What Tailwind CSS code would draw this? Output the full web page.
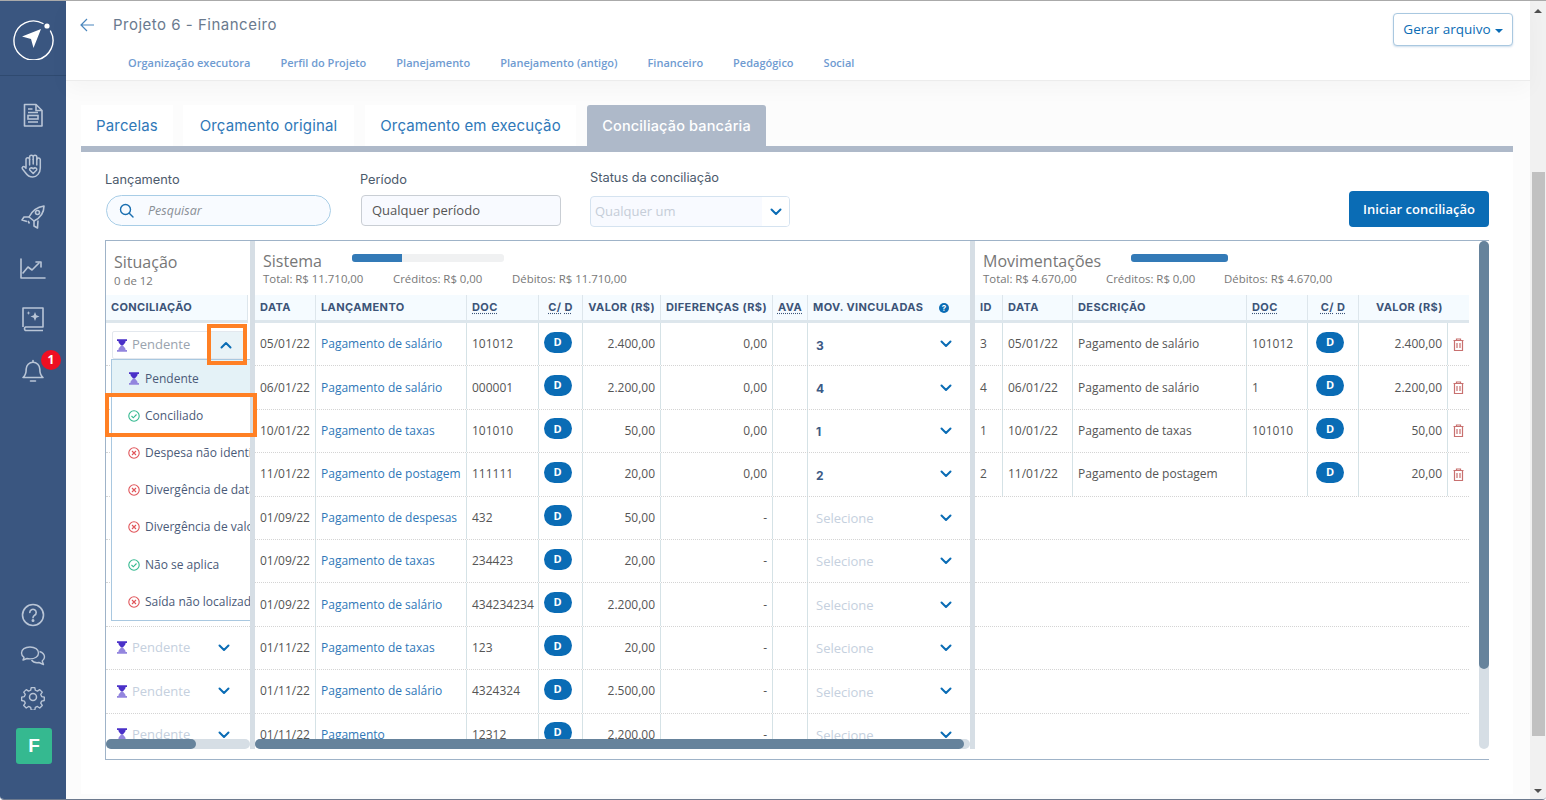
<!DOCTYPE html>
<html lang="pt-BR">
<head>
  <meta charset="UTF-8">
  <title>Projeto 6 - Financeiro</title>
  <script src="https://cdn.jsdelivr.net/npm/@tailwindcss/browser@4"></script>
</head>
<body class="font-['Open_Sans',sans-serif] bg-white">
  <div class="flex w-[1546px] h-[800px] overflow-hidden border-t border-b border-t-[#aaaaaa] border-b-[#6d7a8e] rounded-b-[4px]">

    <!-- Sidebar -->
    <aside class="w-[66px] h-full shrink-0 bg-[#3a5680] flex flex-col items-center text-[#b9c5d6] pb-[35px]">
      <div class="w-full h-[75px] border-b border-[#2f4a70] flex items-center justify-center shrink-0">
        <svg width="44" height="44" viewBox="0 0 44 44" fill="none">
          <path d="M32 7.500A19.500 19.500 0 1 0 39.500 15" stroke="#fff" stroke-width="1.400" stroke-linecap="round"/>
          <circle cx="36" cy="10" r="2.600" fill="#fff"/>
          <path d="M30 13 L11 20.500 L20 23 L22.500 32 Z" fill="#fff"/>
        </svg>
      </div>
      <div class="flex flex-col items-center gap-[25px] mt-[26px]">
        <svg width="26" height="26" viewBox="0 0 26 26" fill="none" stroke="currentColor" stroke-width="1.600">
          <path d="M4.500 2.500h11.500l6 6v15.500H4.500z" stroke-linejoin="round"/><path d="M16 2.500v6h6M8 7h4.500M8 10.500h10M8 20h10"/><rect x="8" y="13.500" width="10" height="3.500"/>
        </svg>
        <svg width="26" height="26" viewBox="0 0 26 26" fill="none" stroke="currentColor" stroke-width="1.500" stroke-linecap="round" stroke-linejoin="round">
          <path d="M6 14.500V6.500a1.800 1.800 0 0 1 3.600 0V4a1.800 1.800 0 0 1 3.600 0v-.2a0 0 0 0 1 0 0M13.200 4v2.500M13.200 4a1.800 1.800 0 0 1 3.600 0v2.500a1.800 1.800 0 0 1 3.500 0V15c0 5-3.500 9-7.500 9-3.500 0-5.500-1.500-7.500-4.500L2.500 16c-1.200-1.700 1-3.200 2.300-2l1.200 1.300"/><path d="M9.600 6.500V12M13.200 6.500V11M16.800 6.500V12"/><path d="M13.200 20.500l-3.200-3.200c-1.300-1.600 1.200-3.500 3.200-1.500 2-2 4.500-.1 3.200 1.500z"/>
        </svg>
        <svg width="26" height="26" viewBox="0 0 26 26" fill="none" stroke="currentColor" stroke-width="1.600" stroke-linejoin="round">
          <path d="M9 13C12 7 17 3 24 2c0 7-4 12-10 15z"/><circle cx="17.500" cy="8.500" r="2"/><path d="M9 13H4l-2 3 5 1.500M14 17v5l3.500 2 .5-7.500M8 17l1.500 2.500"/>
        </svg>
        <svg width="26" height="26" viewBox="0 0 26 26" fill="none" stroke="currentColor" stroke-width="1.600" stroke-linecap="round" stroke-linejoin="round">
          <path d="M1 4v19h24"/><path d="M3 18l5-6 4 3 7-7"/><path d="M16 7h5v5"/>
        </svg>
        <svg width="26" height="26" viewBox="0 0 26 26" fill="none" stroke="currentColor" stroke-width="1.600" stroke-linejoin="round">
          <path d="M3 21V2h20v19H5.500a2 2 0 0 0 0 3.500H23"/><path d="M15 6l1.300 3.200 3.200 1.300-3.200 1.300L15 15l-1.300-3.200-3.200-1.300 3.200-1.300zM8.500 5l.5 1.500 1.500.5-1.500.5-.5 1.500-.5-1.500-1.500-.5 1.500-.5z" fill="currentColor" stroke="none"/>
        </svg>
        <div class="relative">
          <svg width="26" height="26" viewBox="0 0 26 26" fill="none" stroke="currentColor" stroke-width="1.600" stroke-linejoin="round" stroke-linecap="round">
            <path d="M3 20.500c2.500-2 3.200-4 3.200-8.500a6.800 6.800 0 0 1 13.600 0c0 4.500.7 6.500 3.200 8.500z"/><path d="M13 5V3.500M10.500 24h5"/>
          </svg>
          <span class="absolute left-[21px] top-[-7px] w-[20px] h-[20px] rounded-full bg-[#ee0f22] text-white text-[12px] font-bold flex items-center justify-center">1</span>
        </div>
      </div>
      <div class="mt-auto flex flex-col items-center gap-[15px]">
        <svg width="26" height="26" viewBox="0 0 26 26" fill="none" stroke="currentColor" stroke-width="1.600" stroke-linecap="round">
          <circle cx="13" cy="13" r="10.500"/><path d="M9.800 10.500a3.200 3.200 0 1 1 4.800 2.800c-1 .6-1.600 1.200-1.600 2.500"/><circle cx="13" cy="18.500" r=".7" fill="currentColor"/>
        </svg>
        <svg width="26" height="26" viewBox="0 0 26 26" fill="none" stroke="currentColor" stroke-width="1.400" stroke-linejoin="round">
          <path d="M10 4c-5 0-8.500 2.500-8.500 6 0 1.800 1 3.300 2.500 4.400L3 17l4-1.500c1 .3 2 .4 3 .4 5 0 8.500-2.500 8.500-6S15 4 10 4z"/><path d="M19.500 8.500c3 1 5 3 5 5.500 0 1.700-.9 3-2.300 4l1.300 3.500-4.500-2c-3 .5-6-.3-7.500-2.500"/>
        </svg>
        <svg width="26" height="26" viewBox="0 0 26 26" fill="none" stroke="currentColor" stroke-width="1.500" stroke-linejoin="round">
          <circle cx="13" cy="13" r="3.500"/><path d="M11 2.500h4l.6 3 2.300 1 2.600-1.700 2.800 2.800-1.700 2.600 1 2.300 3 .6v0l-.1 3.800-2.900.6-1 2.300 1.700 2.600-2.800 2.800-2.600-1.700-2.300 1-.6 3h-4l-.6-3-2.300-1-2.600 1.700-2.800-2.800 1.700-2.600-1-2.300-3-.6v-3.800l3-.6 1-2.300-1.700-2.600 2.800-2.800 2.600 1.700 2.300-1z" transform="translate(1.300 1.300) scale(.9)"/>
        </svg>
        <div class="w-[36px] h-[36px] mt-[3px] ml-[2px] rounded-[3px] bg-[#35b990] text-white font-['Liberation_Sans',sans-serif] font-bold text-[19px] flex items-center justify-center">F</div>
      </div>
    </aside>

    <!-- Main -->
    <main class="flex-1 h-full bg-[#fcfcfc] flex flex-col min-w-0">
      <header class="relative h-[80px] shrink-0 bg-white border-b border-[#ececec] shadow-[0_8px_20px_rgba(0,0,0,0.03)]">
        <div class="flex items-center pl-[14px] pt-[13px]">
          <svg width="15" height="14" viewBox="0 0 15 14" fill="none" stroke="#4a86bd" stroke-width="1.200"><path d="M14 7H1M7 1 1 7l6 6"/></svg>
          <h1 class="ml-[18px] font-['Inter',sans-serif] text-[15px] text-[#6a7a8e] tracking-[0.5px]">Projeto 6 - Financeiro</h1>
        </div>
        <nav class="flex gap-[30px] pl-[62px] mt-[18px] text-[11px] font-semibold text-[#6f9bd1]">
          <a>Organização executora</a><a>Perfil do Projeto</a><a>Planejamento</a><a>Planejamento (antigo)</a><a>Financeiro</a><a>Pedagógico</a><a>Social</a>
        </nav>
        <button class="absolute right-[17px] top-[12px] w-[120px] h-[33px] rounded-[4px] border border-[#a9c8e0] shadow-[0_1px_2px_rgba(90,140,190,0.3)] bg-white text-[13.500px] text-[#0a6cb5] flex items-center justify-center gap-[4px]">
          Gerar arquivo <span class="w-0 h-0 border-x-[4px] border-x-transparent border-t-[4px] border-t-[#0a6cb5] mt-[2px]"></span>
        </button>
      </header>

      <section class="ml-[15px] w-[1432px] flex-1 mt-[24px] min-h-0">
        <!-- Tabs -->
        <div class="flex gap-[11px] h-[41px] font-['Inter',sans-serif] text-[15px] tracking-[0.15px] text-[#2f78b8]">
          <div class="w-[92px] pt-[2px] bg-white flex items-center justify-center">Parcelas</div>
          <div class="w-[171px] pt-[2px] ml-[-1px] bg-white flex items-center justify-center">Orçamento original</div>
          <div class="w-[211px] pt-[2px] bg-white flex items-center justify-center">Orçamento em execução</div>
          <div class="w-[179px] bg-[#aeb9c9] rounded-t-[3px] text-white text-[14.500px] font-medium flex items-center justify-center">Conciliação bancária</div>
        </div>

        <div class="bg-white h-[648px] border-t-[6px] border-[#aeb9c9] px-[24px]">
          <!-- Filters -->
          <div class="relative h-[88px]">
            <div class="absolute left-0 top-[20px]">
              <label class="block font-['Inter',sans-serif] text-[12.800px] leading-[16px] text-[#4c5a6c] mb-[7px]">Lançamento</label>
              <div class="w-[225px] h-[31px] ml-[1px] rounded-full border border-[#a8cde6] bg-[#f8fbff] flex items-center pl-[12px]">
                <svg width="15" height="15" viewBox="0 0 15 15" fill="none" stroke="#1a6fb0" stroke-width="1.400" stroke-linecap="round"><circle cx="6.500" cy="6.500" r="5"/><path d="m10.500 10.500 3.500 3.500"/></svg>
                <span class="ml-[14px] pt-[1px] text-[12.500px] italic text-[#8a8f96]">Pesquisar</span>
              </div>
            </div>
            <div class="absolute left-[255px] top-[20px]">
              <label class="block font-['Inter',sans-serif] text-[12.800px] leading-[16px] text-[#4c5a6c] mb-[7px]">Período</label>
              <div class="w-[200px] h-[31px] ml-[1px] rounded-[4px] border border-[#c9ced4] bg-[#f8faff] flex items-center pl-[10px] text-[13px] text-[#555]">Qualquer período</div>
            </div>
            <div class="absolute left-[485px] top-[18px]">
              <label class="block font-['Inter',sans-serif] text-[12.800px] leading-[16px] text-[#4c5a6c] mb-[10px]">Status da conciliação</label>
              <div class="w-[200px] h-[31px] rounded-[4px] border border-[#d5e3f0] bg-[#f8faff] flex items-center justify-between pl-[4px] text-[13px] text-[#c5cdd8] overflow-hidden">
                <span>Qualquer um</span>
                <span class="w-[27px] h-full bg-white flex items-center justify-center">
                  <svg width="12" height="8" viewBox="0 0 12 8" fill="none" stroke="#0a6cb5" stroke-width="2" stroke-linecap="round" stroke-linejoin="round"><path d="m1.500 1.500 4.500 4.500 4.500-4.500"/></svg>
                </span>
              </div>
            </div>
            <button class="absolute right-0 top-[39px] w-[140px] h-[36px] pt-[1px] rounded-[4px] bg-[#0a6cb5] text-white text-[13px] font-semibold">Iniciar conciliação</button>
          </div>

          <!-- Tables -->
          <div class="relative w-[1384px] h-[520px] border-t border-b border-l border-[#9fb3c8]">
            <div class="flex h-[508px]">
              <!-- Situacao -->
              <div class="relative w-[144px] shrink-0 overflow-hidden">
                <div class="h-[54px] pl-[8px] pt-[10px] text-[#777]">
                  <div class="text-[16px] leading-[22px]">Situação</div>
                  <div class="text-[11.400px] leading-[14px] mt-[1px]">0 de 12</div>
                </div>
                <div class="w-[142px] h-[28px] bg-[#f5fbff] border-b-[3px] border-r border-[#dde6ec] flex items-center pl-[5px] font-['Inter',sans-serif] text-[11px] tracking-[0.35px] font-bold text-[#3c5478]">CONCILIAÇÃO</div>
                <div id="statusRows"></div>
                <!-- open select -->
                <div class="absolute left-[6px] top-[90px] w-[132px] h-[28px] bg-white border border-[#e3e8ee] rounded-[2px] flex items-center pl-[4px] text-[13px] text-[#9aa3ae]">
                  <svg width="10" height="13" viewBox="0 0 11 14" class="shrink-0"><path fill="#4a30c8" d="M0 0h11v2H9.500c0 2.500-2 3.200-3 5h-2c-1-1.800-3-2.500-3-5H0z"/><path fill="#9385de" d="M4.500 7h2c1 1.800 3 2.500 3 5H11v2H0v-2h1.500c0-2.500 2-3.200 3-5z"/></svg>
                  <span class="ml-[5px]">Pendente</span>
                  <span class="ml-auto w-[34px] h-[26px] bg-[#e9f3f7] flex items-center justify-center">
                    <svg width="12" height="8" viewBox="0 0 12 8" fill="none" stroke="#0a6cb5" stroke-width="2" stroke-linecap="round" stroke-linejoin="round"><path d="m1.500 6.500 4.500-4.500 4.500 4.500"/></svg>
                  </span>
                </div>
                <div id="statusMenu" class="absolute left-[5px] top-[118px] w-[160px] h-[262px] bg-white border border-[#a9c8e0]"></div>
              </div>
              <div class="w-[5px] shrink-0 bg-[#d6dee5]"></div>

              <!-- Sistema -->
              <div class="w-[715px] shrink-0 overflow-hidden">
                <div class="relative h-[54px] pl-[8px] pt-[9px] text-[#777]">
                  <div class="text-[16px] leading-[22px]">Sistema</div>
                  <div class="absolute left-[97px] top-[13px] w-[152px] h-[8px] rounded-[3px] bg-[#f0f1f2]"><div class="w-[50px] h-full rounded-l-[3px] bg-[#337ab7]"></div></div>
                  <div class="flex text-[11.400px] leading-[14px]"><span class="w-[130px]">Total: R$ 11.710,00</span><span class="w-[119px]">Créditos: R$ 0,00</span><span>Débitos: R$ 11.710,00</span></div>
                </div>
                <div class="grid grid-cols-[61px_151px_72px_44px_78px_112px_35px_162px] h-[28px] bg-[#f5fbff] border-b-[3px] border-[#dde6ec] font-['Inter',sans-serif] text-[11px] tracking-[0.4px] font-bold text-[#3c5478]">
                  <div class="flex items-center pl-[5px] border-r border-[#dde6ec]">DATA</div>
                  <div class="flex items-center pl-[5px] border-r border-[#dde6ec]">LANÇAMENTO</div>
                  <div class="flex items-center pl-[5px] border-r border-[#dde6ec]"><span class="underline decoration-dotted underline-offset-2">DOC</span></div>
                  <div class="flex items-center justify-center gap-[3px] border-r border-[#dde6ec]"><span class="underline decoration-dotted underline-offset-2">C/</span><span class="underline decoration-dotted underline-offset-2">D</span></div>
                  <div class="flex items-center justify-end pr-[5px] border-r border-[#dde6ec]">VALOR (R$)</div>
                  <div class="flex items-center justify-end pr-[5px] border-r border-[#dde6ec]">DIFERENÇAS (R$)</div>
                  <div class="flex items-center justify-center border-r border-[#dde6ec]"><span class="underline decoration-dotted underline-offset-2">AVA</span></div>
                  <div class="flex items-center pl-[5px] pr-[21px] justify-between">MOV. VINCULADAS
                    <span class="w-[10px] h-[10px] rounded-full bg-[#0a6cb5] text-white text-[8px] tracking-normal leading-none flex items-center justify-center">?</span>
                  </div>
                </div>
                <div id="systemRows"></div>
              </div>
              <div class="w-[5px] shrink-0 bg-[#d6dee5]"></div>

              <!-- Movimentacoes -->
              <div class="w-[503px] shrink-0 overflow-hidden">
                <div class="relative h-[54px] pl-[8px] pt-[9px] text-[#777]">
                  <div class="text-[16px] leading-[22px]">Movimentações</div>
                  <div class="absolute left-[156px] top-[13px] w-[97px] h-[8px] rounded-[3px] bg-[#337ab7]"></div>
                  <div class="flex text-[11.400px] leading-[14px]"><span class="w-[123px]">Total: R$ 4.670,00</span><span class="w-[118px]">Créditos: R$ 0,00</span><span>Débitos: R$ 4.670,00</span></div>
                </div>
                <div class="grid grid-cols-[28px_70px_174px_61px_51px_89px_21px] w-[494px] h-[28px] bg-[#f5fbff] border-b-[3px] border-[#dde6ec] font-['Inter',sans-serif] text-[11px] tracking-[0.4px] font-bold text-[#3c5478]">
                  <div class="flex items-center pl-[5px] border-r border-[#dde6ec]">ID</div>
                  <div class="flex items-center pl-[5px] border-r border-[#dde6ec]">DATA</div>
                  <div class="flex items-center pl-[5px] border-r border-[#dde6ec]">DESCRIÇÃO</div>
                  <div class="flex items-center pl-[5px] border-r border-[#dde6ec]"><span class="underline decoration-dotted underline-offset-2">DOC</span></div>
                  <div class="flex items-center justify-center gap-[3px] border-r border-[#dde6ec]"><span class="underline decoration-dotted underline-offset-2">C/</span><span class="underline decoration-dotted underline-offset-2">D</span></div>
                  <div class="col-span-2 flex items-center pl-[17px]">VALOR (R$)</div>
                </div>
                <div id="moveRows" class="w-[494px]"></div>
              </div>
            </div>

            <!-- Scrollbars lying over the panels -->
            <div class="absolute left-0 top-[498px] w-[144px] h-[10px] rounded-full bg-[#d6dee5]"><div class="w-[90px] h-full rounded-full bg-[#66839c]"></div></div>
            <div class="absolute left-[149px] top-[498px] w-[715px] h-[10px] rounded-full bg-[#d6dee5]"><div class="w-[709px] h-full rounded-full bg-[#66839c]"></div></div>
            <div class="absolute right-0 top-0 w-[10px] h-[508px] rounded-full bg-[#d6dee5]"><div class="h-[428px] rounded-full bg-[#66839c]"></div></div>

            <!-- Orange highlights -->
            <div class="absolute left-[101px] top-[83px] w-[40px] h-[41px] border-[4px] border-[#ff8024]"></div>
            <div class="absolute left-[-1px] top-[152px] w-[152px] h-[44px] border-[4px] border-[#ff8024]"></div>
          </div>
        </div>
      </section>
    </main>

    <!-- Page scrollbar -->
    <div class="w-[16px] h-full shrink-0 bg-[#f1f1f1] flex flex-col items-center">
      <div class="h-[171px] w-full flex justify-center pt-[8px]"><span class="w-0 h-0 border-x-[4px] border-x-transparent border-b-[4px] border-b-[#505050]"></span></div>
      <div class="w-[13px] h-[564px] bg-[#c1c1c1]"></div>
      <div class="mt-auto pb-[6px]"><span class="block w-0 h-0 border-x-[4px] border-x-transparent border-t-[4px] border-t-[#505050]"></span></div>
    </div>
  </div>

  <script>
    const chevronDown = '<svg width="12" height="8" viewBox="0 0 12 8" fill="none" stroke="#0a6cb5" stroke-width="2" stroke-linecap="round" stroke-linejoin="round"><path d="m1.500 1.500 4.500 4.500 4.500-4.500"/></svg>';
    const hourglass = '<svg width="10" height="13" viewBox="0 0 11 14" class="shrink-0"><path fill="#4a30c8" d="M0 0h11v2H9.500c0 2.500-2 3.200-3 5h-2c-1-1.800-3-2.500-3-5H0z"/><path fill="#9385de" d="M4.500 7h2c1 1.800 3 2.500 3 5H11v2H0v-2h1.500c0-2.500 2-3.200 3-5z"/></svg>';
    const okIcon = '<svg width="12" height="12" viewBox="0 0 12 12" fill="none" stroke="#35b990" stroke-width="1.100" class="shrink-0"><circle cx="6" cy="6" r="5.200"/><path d="m3.500 6 1.800 1.800 3.200-3.300"/></svg>';
    const errIcon = '<svg width="12" height="12" viewBox="0 0 12 12" fill="none" stroke="#e0555a" stroke-width="1.100" class="shrink-0"><circle cx="6" cy="6" r="5.200"/><path d="m4 4 4 4M8 4l-4 4"/></svg>';
    const trash = '<svg width="11" height="13" viewBox="0 0 11 13" fill="none" stroke="#c8706f" stroke-width="1.200"><path d="M.5 2.500h10M3.500 2.500V1h4v1.500M1.500 2.500V12.500h8V2.500M4 5v5M7 5v5"/></svg>';
    const badge = '<span class="w-[28px] h-[21px] mb-[4px] mr-[6px] rounded-full bg-[#0a6cb5] text-white text-[11px] font-bold flex items-center justify-center">D</span>';

    const systemData = [
      ['05/01/22', 'Pagamento de salário', '101012', '2.400,00', '0,00', '3'],
      ['06/01/22', 'Pagamento de salário', '000001', '2.200,00', '0,00', '4'],
      ['10/01/22', 'Pagamento de taxas', '101010', '50,00', '0,00', '1'],
      ['11/01/22', 'Pagamento de postagem', '111111', '20,00', '0,00', '2'],
      ['01/09/22', 'Pagamento de despesas', '432', '50,00', '-', ''],
      ['01/09/22', 'Pagamento de taxas', '234423', '20,00', '-', ''],
      ['01/09/22', 'Pagamento de salário', '434234234', '2.200,00', '-', ''],
      ['01/11/22', 'Pagamento de taxas', '123', '20,00', '-', ''],
      ['01/11/22', 'Pagamento de salário', '4324324', '2.500,00', '-', ''],
      ['01/11/22', 'Pagamento', '12312', '2.200,00', '-', '']
    ];
    const moveData = [
      ['3', '05/01/22', 'Pagamento de salário', '101012', '2.400,00'],
      ['4', '06/01/22', 'Pagamento de salário', '1', '2.200,00'],
      ['1', '10/01/22', 'Pagamento de taxas', '101010', '50,00'],
      ['2', '11/01/22', 'Pagamento de postagem', '', '20,00']
    ];
    const menuItems = [
      [hourglass, 'Pendente'], [okIcon, 'Conciliado'], [errIcon, 'Despesa não identificada'],
      [errIcon, 'Divergência de data'], [errIcon, 'Divergência de valor'], [okIcon, 'Não se aplica'], [errIcon, 'Saída não localizada']
    ];

    // Left column: the first seven rows lie under the open menu
    document.getElementById('statusRows').innerHTML = systemData.map((row, i) => `
      <div class="h-[43.400px] border-b border-dotted border-[#d4d4d4] flex items-center pl-[11px] text-[13px] text-[#c5d0de]">
        ${i < 7 ? '' : `${hourglass}<span class="ml-[5px]">Pendente</span><span class="ml-[28px]">${chevronDown}</span>`}
      </div>`).join('');

    document.getElementById('statusMenu').innerHTML = menuItems.map((item, i) => `
      <div class="h-[37.200px] flex items-center pl-[16px] gap-[5px] text-[12px] whitespace-nowrap text-[#4a5a78] ${i === 0 ? 'bg-[#e4f2f7]' : ''}"><span class="w-[12px] shrink-0 flex justify-center">${item[0]}</span><span>${item[1]}</span></div>`).join('');

    // System table
    document.getElementById('systemRows').innerHTML = systemData.map(row => `
      <div class="grid grid-cols-[61px_151px_72px_44px_78px_112px_35px_162px] h-[43.400px] border-b border-dotted border-[#d4d4d4] text-[12px] text-[#555]">
        <div class="flex items-center pl-[5px] border-r border-[#d5e2e6]">${row[0]}</div>
        <div class="flex items-center pl-[5px] border-r border-[#d5e2e6] text-[#2f78b8] whitespace-nowrap">${row[1]}</div>
        <div class="flex items-center pl-[5px] border-r border-[#d5e2e6]">${row[2]}</div>
        <div class="flex items-center justify-center border-r border-[#d5e2e6]">${badge}</div>
        <div class="flex items-center justify-end pr-[5px] border-r border-[#d5e2e6]">${row[3]}</div>
        <div class="flex items-center justify-end pr-[5px] border-r border-[#d5e2e6]">${row[4]}</div>
        <div class="border-r border-[#d5e2e6]"></div>
        <div class="flex items-center justify-between pl-[8px] pr-[18px]">
          ${row[5] ? `<span class="mt-[3px] font-['Inter',sans-serif] font-bold text-[#3c5a85]">${row[5]}</span>` : '<span class="mt-[2px] text-[13px] text-[#c5d0de]">Selecione</span>'}
          ${chevronDown}
        </div>
      </div>`).join('');

    // Bank movements table
    const filledRows = moveData.map(row => `
      <div class="grid grid-cols-[28px_70px_174px_61px_51px_89px_21px] h-[43.400px] border-b border-dotted border-[#d4d4d4] text-[12px] text-[#555]">
        <div class="flex items-center pl-[5px] border-r border-[#d5e2e6]">${row[0]}</div>
        <div class="flex items-center pl-[5px] border-r border-[#d5e2e6]">${row[1]}</div>
        <div class="flex items-center pl-[5px] border-r border-[#d5e2e6]">${row[2]}</div>
        <div class="flex items-center pl-[5px] border-r border-[#d5e2e6]">${row[3]}</div>
        <div class="flex items-center justify-center border-r border-[#d5e2e6]">${badge}</div>
        <div class="flex items-center justify-end pr-[5px] border-r border-[#d5e2e6]">${row[4]}</div>
        <div class="flex items-center justify-center">${trash}</div>
      </div>`).join('');
    const emptyRow = '<div class="h-[43.400px] border-b border-dotted border-[#d4d4d4]"></div>';
    document.getElementById('moveRows').innerHTML = filledRows + emptyRow.repeat(5);
  </script>
</body>
</html>
